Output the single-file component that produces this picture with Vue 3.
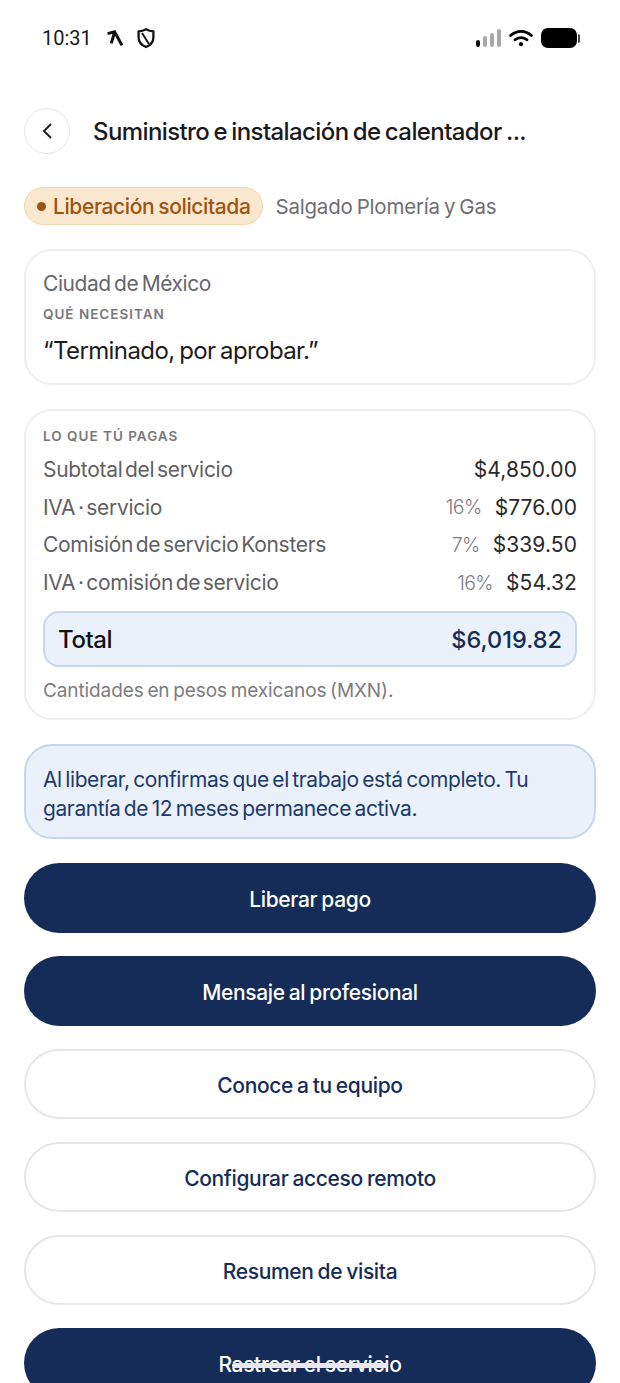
<template>
  <div class="screen">
    <!-- Barra de estado -->
    <div class="status-bar">
      <div class="status-left">
        <span class="time">10:31</span>
        <svg class="k-icon" width="18" height="18" viewBox="0 0 18 18" fill="none">
          <path d="M1.6 4.6 L8.6 2.8 L16 16.4 M8.6 3.4 L5.2 14.4" stroke="#111" stroke-width="3" stroke-linejoin="miter" />
        </svg>
        <svg class="shield-icon" width="20" height="22" viewBox="0 0 20 22" fill="none">
          <path d="M10 2.2 C12.4 3.6 14.6 4.2 17.4 4.4 V10.4 C17.4 15 14.2 18.2 10 20 C5.8 18.2 2.6 15 2.6 10.4 V4.4 C5.4 4.2 7.6 3.6 10 2.2 Z" stroke="#111" stroke-width="2.3" stroke-linejoin="round" />
          <path d="M6 6 L13 17" stroke="#111" stroke-width="1.9" />
        </svg>
      </div>
      <div class="status-right">
        <div class="signal">
          <span v-for="(bar, i) in signalBars" :key="i" class="bar" :class="{ on: bar.on }" :style="{ height: bar.h + 'px' }"></span>
        </div>
        <svg width="24" height="18" viewBox="0 0 24 18" fill="none">
          <path d="M1.6 6.6 C7.6 1 16.4 1 22.4 6.6" stroke="#000" stroke-width="2.8" stroke-linecap="round" />
          <path d="M6 10.8 C9.4 7.8 14.6 7.8 18 10.8" stroke="#000" stroke-width="2.8" stroke-linecap="round" />
          <circle cx="12" cy="15.2" r="2.1" fill="#000" />
        </svg>
        <div class="battery"><span class="battery-body"></span><span class="battery-cap"></span></div>
      </div>
    </div>

    <!-- Encabezado -->
    <div class="header">
      <button class="back">
        <svg width="14" height="18" viewBox="0 0 14 18" fill="none">
          <path d="M10.5 2.5 L4 9 L10.5 15.5" stroke="#1c1c1e" stroke-width="1.9" stroke-linecap="round" stroke-linejoin="round" />
        </svg>
      </button>
      <h1 class="title">Suministro e instalación de calentador ...</h1>
    </div>

    <div class="meta">
      <div class="badge"><span class="dot"></span>Liberación solicitada</div>
      <span class="company">Salgado Plomería y Gas</span>
    </div>

    <div class="card need">
      <div class="city">Ciudad de México</div>
      <div class="label">QUÉ NECESITAN</div>
      <div class="quote">“Terminado, por aprobar.”</div>
    </div>

    <div class="card pay">
      <div class="label">LO QUE TÚ PAGAS</div>
      <div class="rows">
        <div v-for="row in rows" :key="row.name" class="row">
          <span class="row-name">{{ row.name }}</span>
          <span class="row-values">
            <span v-if="row.pct" class="pct">{{ row.pct }}</span>
            <span class="amount">{{ row.amount }}</span>
          </span>
        </div>
      </div>
      <div class="total">
        <span class="total-name">Total</span>
        <span class="total-amount">$6,019.82</span>
      </div>
      <div class="note">Cantidades en pesos mexicanos (MXN).</div>
    </div>

    <div class="info">Al liberar, confirmas que el trabajo está completo. Tu garantía de 12 meses permanece activa.</div>

    <div class="actions">
      <button v-for="action in actions" :key="action.text" class="action" :class="action.kind">{{ action.text }}</button>
    </div>

    <div class="home-indicator"></div>
  </div>
</template>

<script setup>
const signalBars = [
  { h: 7, on: true },
  { h: 11, on: false },
  { h: 14, on: false },
  { h: 18, on: false }
];

const rows = [
  { name: 'Subtotal del servicio', pct: '', amount: '$4,850.00' },
  { name: 'IVA · servicio', pct: '16%', amount: '$776.00' },
  { name: 'Comisión de servicio Konsters', pct: '7%', amount: '$339.50' },
  { name: 'IVA · comisión de servicio', pct: '16%', amount: '$54.32' }
];

const actions = [
  { text: 'Liberar pago', kind: 'solid' },
  { text: 'Mensaje al profesional', kind: 'solid' },
  { text: 'Conoce a tu equipo', kind: 'outline' },
  { text: 'Configurar acceso remoto', kind: 'outline' },
  { text: 'Resumen de visita', kind: 'outline' },
  { text: 'Rastrear el servicio', kind: 'solid' }
];
</script>

<style>
html, body {
  margin: 0;
  background: #fff;
  overflow: hidden;
}
</style>

<style scoped>
.screen {
  position: relative;
  box-sizing: border-box;
  width: 620px;
  height: 1383px;
  overflow: hidden;
  background: #fff;
  padding: 0 24px;
  font-family: Inter, "Liberation Sans", sans-serif;
  color: #1c1c1e;
}

.status-bar {
  display: flex;
  justify-content: space-between;
  align-items: center;
  height: 76px;
  padding: 0 16px 0 18px;
}

.status-left {
  display: flex;
  align-items: center;
  gap: 12px;
}

.time {
  font-family: Roboto, sans-serif;
  font-size: 20px;
  color: #1a1a1a;
  margin-right: 2px;
}

.status-right {
  display: flex;
  align-items: center;
  gap: 8px;
}

.signal {
  display: flex;
  align-items: flex-end;
  gap: 2.5px;
  height: 18px;
  margin-left: -1px;
}

.bar {
  width: 4.5px;
  border-radius: 2px;
  background: #a8a8a8;
}

.bar.on {
  background: #111;
}

.battery {
  display: flex;
  align-items: center;
  gap: 1px;
}

.battery-body {
  width: 36px;
  height: 20px;
  border-radius: 7px;
  background: #000;
}

.battery-cap {
  width: 2px;
  height: 9px;
  border-radius: 0 2px 2px 0;
  background: #444;
}

.header {
  display: flex;
  align-items: center;
  gap: 23px;
  margin-top: 32px;
}

.back {
  display: flex;
  align-items: center;
  justify-content: center;
  box-sizing: border-box;
  width: 46px;
  height: 46px;
  padding: 0;
  border: 1.5px solid #e6e6e8;
  border-radius: 50%;
  background: #fff;
}

.title {
  margin: 0;
  font-size: 24px;
  font-weight: 500;
  letter-spacing: -0.6px;
  word-spacing: -1.5px;
  color: #1a1a1c;
  white-space: nowrap;
}

.meta {
  display: flex;
  align-items: center;
  gap: 12px;
  margin-top: 33px;
}

.badge {
  display: flex;
  align-items: center;
  box-sizing: border-box;
  height: 38px;
  padding: 0 12px;
  gap: 7px;
  background: #fae7cf;
  border: 1.5px solid #f4d6ad;
  border-radius: 19px;
  color: #9c5410;
  font-size: 21px;
  font-weight: 500;
  letter-spacing: -0.4px;
  word-spacing: -1px;
  white-space: nowrap;
}

.dot {
  width: 9px;
  height: 9px;
  border-radius: 50%;
  background: #9c5410;
}

.company {
  font-size: 20.5px;
  color: #6e6e73;
  letter-spacing: -0.2px;
  word-spacing: -1.5px;
}

.card {
  box-sizing: border-box;
  border: 2px solid #eeeeef;
  border-radius: 28px;
  padding: 0 17px;
  background: #fff;
}

.need {
  height: 136px;
  margin-top: 24px;
  padding-top: 19px;
}

.city {
  font-size: 21px;
  line-height: 28px;
  color: #66666b;
  letter-spacing: -0.45px;
  word-spacing: -2px;
}

.label {
  font-size: 13.5px;
  line-height: 18px;
  font-weight: 600;
  letter-spacing: 1px;
  color: #77777c;
}

.need .label {
  margin-top: 7px;
}

.quote {
  margin-top: 12px;
  font-size: 24px;
  line-height: 32px;
  color: #1c1c1e;
  letter-spacing: -0.6px;
  word-spacing: -1.5px;
}

.pay {
  height: 311px;
  margin-top: 24px;
  padding-top: 16px;
}

.rows {
  margin-top: 6px;
}

.row {
  display: flex;
  justify-content: space-between;
  align-items: center;
  height: 37.6px;
  font-size: 21px;
  letter-spacing: -0.3px;
  word-spacing: -3px;
  color: #5f5f64;
}

.row-values {
  display: flex;
  align-items: center;
  gap: 13px;
}

.pct {
  font-size: 19.5px;
  font-weight: 300;
  color: #7d7d82;
  letter-spacing: -0.6px;
}

.amount {
  color: #2a2a2c;
  font-size: 21px;
  letter-spacing: 0.1px;
}

.total {
  display: flex;
  justify-content: space-between;
  align-items: center;
  box-sizing: border-box;
  height: 56px;
  margin-top: 10px;
  padding: 1px 13px;
  background: #ebf1fa;
  border: 2px solid #c5d7ee;
  border-radius: 16px;
}

.total-name {
  font-size: 24px;
  font-weight: 500;
  color: #111114;
  letter-spacing: -0.4px;
}

.total-amount {
  font-size: 23.5px;
  font-weight: 500;
  color: #152c55;
}

.note {
  margin-top: 11px;
  font-size: 19px;
  line-height: 26px;
  color: #7c7c80;
  letter-spacing: -0.1px;
  word-spacing: -1.5px;
}

.info {
  box-sizing: border-box;
  height: 95px;
  margin-top: 24px;
  padding: 19px 17px 0;
  background: #ebf1fa;
  border: 2px solid #c5d7ee;
  border-radius: 28px;
  font-size: 21px;
  line-height: 29px;
  color: #1d3a6b;
  letter-spacing: -0.4px;
  word-spacing: -2px;
}

.actions {
  display: flex;
  flex-direction: column;
  gap: 23.4px;
  margin-top: 24px;
}

.action {
  box-sizing: border-box;
  flex: none;
  height: 69.6px;
  width: 100%;
  padding: 3px 0 0;
  border-radius: 35px;
  font-family: inherit;
  font-size: 21px;
  font-weight: 500;
  letter-spacing: -0.35px;
  word-spacing: -1.2px;
}

.solid {
  background: #152c58;
  border: none;
  color: #fff;
}

.outline {
  background: #fff;
  border: 2px solid #e6e6e8;
  color: #152c58;
}

.home-indicator {
  position: absolute;
  left: 232px;
  bottom: 15px;
  width: 156px;
  height: 5px;
  border-radius: 3px;
  background: #e8e8ec;
}
</style>
